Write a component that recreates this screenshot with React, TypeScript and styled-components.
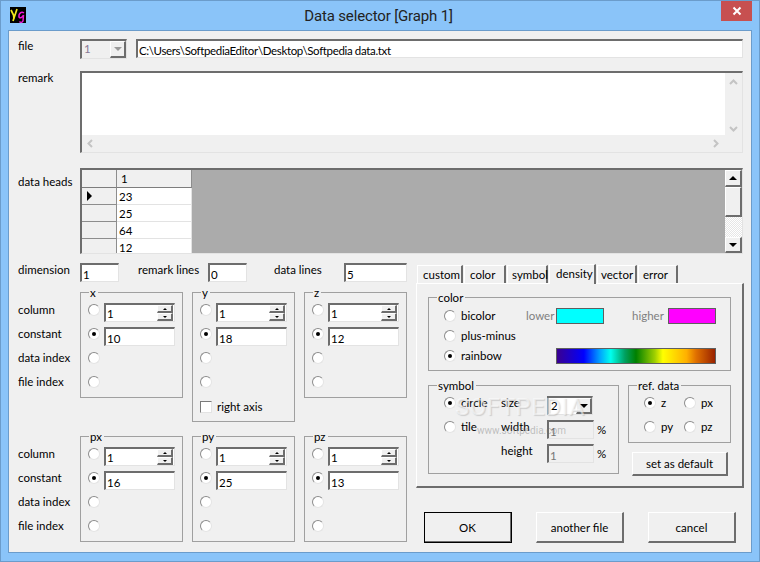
import { Fragment } from "react"
import styled, { createGlobalStyle } from "styled-components"

const GlobalStyle = createGlobalStyle`
  html, body {
    margin: 0;
    padding: 0;
    background: #8ac4f9;
  }
  * {
    box-sizing: border-box;
  }
`

const sunken = `
  border-style: solid;
  border-width: 2px 1px 1px 2px;
  border-color: #6d6d6d #e3e3e3 #e3e3e3 #6d6d6d;
`

const raised = `
  background: #f0f0f0;
  border-style: solid;
  border-width: 1px 2px 2px 1px;
  border-color: #fff #6d6d6d #6d6d6d #fff;
`

const Window = styled.div`
  width: 760px;
  height: 562px;
  display: flex;
  flex-direction: column;
  background: #8ac4f9;
  border: 1px solid #6b9ccb;
  font-family: "Lato", "Liberation Sans", sans-serif;
  font-size: 11.5px;
  color: #000;
  overflow: hidden;
`

const TitleBar = styled.div`
  height: 29px;
  flex: none;
  display: grid;
  grid-template-columns: 1fr auto 1fr;
  align-items: start;
  padding: 0 7px 0 9px;
`

const AppIcon = styled.svg`
  width: 16px;
  height: 16px;
  margin-top: 6px;
  display: block;
`

const Title = styled.div`
  font-family: "Roboto", "Liberation Sans", sans-serif;
  font-size: 15px;
  letter-spacing: -0.15px;
  line-height: 20px;
  margin: 5px 5px 0 0;
  color: #222;
`

const CloseButton = styled.div`
  justify-self: end;
  width: 31px;
  height: 20px;
  background: #c75050;
  display: flex;
  align-items: center;
  justify-content: center;
`

const Client = styled.div`
  margin: 0 7px;
  height: 523px;
  flex: none;
  background: #f0f0f0;
  padding: 8px 8px 0 9px;
  border: 1px solid #6b9ccb;
  display: flex;
  flex-direction: column;
`

const Row = styled.div<{ $top?: number }>`
  display: flex;
  align-items: flex-start;
  margin-top: ${(p) => p.$top ?? 0}px;
`

const Label = styled.div<{ $w?: number; $left?: number; $drop?: number; $muted?: boolean }>`
  width: ${(p) => (p.$w ? `${p.$w}px` : "auto")};
  margin-left: ${(p) => p.$left ?? 0}px;
  margin-top: ${(p) => p.$drop ?? 0}px;
  flex: none;
  line-height: 14px;
  white-space: nowrap;
  color: ${(p) => (p.$muted ? "#7f7f7f" : "inherit")};
`

const TextField = styled.input<{ $w?: number; $h?: number; $left?: number; $tight?: boolean; $disabled?: boolean }>`
  ${sunken}
  display: block;
  width: ${(p) => (p.$w ? `${p.$w}px` : "100%")};
  height: ${(p) => p.$h ?? 19}px;
  flex: ${(p) => (p.$w ? "none" : "1")};
  margin-left: ${(p) => p.$left ?? 0}px;
  min-width: 0;
  background: ${(p) => (p.$disabled ? "#f0f0f0" : "#fff")};
  color: ${(p) => (p.$disabled ? "#777" : "#000")};
  font: inherit;
  letter-spacing: ${(p) => (p.$tight ? "-0.35px" : "normal")};
  padding: 2px 0 0 1px;
  outline: none;
`

const ComboBox = styled.div<{ $w: number; $h: number; $disabled?: boolean }>`
  ${sunken}
  width: ${(p) => p.$w}px;
  height: ${(p) => p.$h}px;
  flex: none;
  display: flex;
  background: ${(p) => (p.$disabled ? "#f0f0f0" : "#fff")};
  color: ${(p) => (p.$disabled ? "#8a7a96" : "#000")};
  padding-left: 2px;
  line-height: 16px;
`

const ComboValue = styled.div`
  flex: 1;
`

const ComboButton = styled.div`
  ${raised}
  width: 16px;
  display: flex;
  align-items: center;
  justify-content: center;
`

const Arrow = styled.span<{ $dir: "up" | "down" | "right"; $size: number; $color?: string; $left?: number }>`
  display: block;
  width: 0;
  height: 0;
  margin-left: ${(p) => p.$left ?? 0}px;
  border-style: solid;
  border-color: transparent;
  border-width: ${(p) =>
    p.$dir === "right"
      ? `${p.$size + 1}px 0 ${p.$size + 1}px ${p.$size + 1}px`
      : p.$dir === "up"
        ? `0 ${p.$size}px ${p.$size}px`
        : `${p.$size}px ${p.$size}px 0`};
  ${(p) => {
    const c = p.$color ?? "#000"
    if (p.$dir === "right") return `border-left-color: ${c};`
    if (p.$dir === "up") return `border-bottom-color: ${c};`
    return `border-top-color: ${c};`
  }}
`

const RemarkBox = styled.div`
  ${sunken}
  flex: 1;
  height: 82px;
  display: grid;
  grid-template-columns: 1fr 17px;
  grid-template-rows: 1fr 17px;
`

const RemarkText = styled.div`
  background: #fff;
`

const VScroll = styled.div`
  display: flex;
  flex-direction: column;
  justify-content: space-between;
  align-items: center;
  padding: 5px 0 2px;
`

const HScroll = styled.div`
  display: flex;
  justify-content: space-between;
  align-items: center;
  padding: 0 5px 0 4px;
`

const Corner = styled.div``

const Chevron = styled.svg`
  width: 9px;
  height: 9px;
  display: block;
`

const HeadGrid = styled.div`
  ${sunken}
  flex: 1;
  height: 86px;
  display: flex;
  background: #ababab;
  overflow: hidden;
`

const HeadTable = styled.div`
  display: grid;
  grid-template-columns: 35px 75px;
  grid-template-rows: 18px;
  grid-auto-rows: 17px;
  align-content: start;
  width: 110px;
  height: 100%;
  overflow: hidden;
  margin-right: auto;
`

const HeadCell = styled.div<{ $top?: boolean; $fixed?: boolean }>`
  background: ${(p) => (p.$fixed ? "#f0f0f0" : "#fff")};
  border-right: 1px solid ${(p) => (p.$fixed ? "#8d8d8d" : "#e3e3e3")};
  border-bottom: 1px solid ${(p) => (p.$top ? "#7d7d7d" : p.$fixed ? "#8d8d8d" : "#e3e3e3")};
  padding: ${(p) => (p.$top ? "0 0 0 4px" : p.$fixed ? "0" : "1px 0 0 2px")};
  line-height: 14px;
  display: flex;
  align-items: center;
`

const GridScroll = styled.div`
  width: 17px;
  flex: none;
  display: flex;
  flex-direction: column;
  background: repeating-conic-gradient(#fff 0 25%, #e6e6e6 0 50%) 0 0 / 2px 2px;
`

const ScrollButton = styled.div<{ $h: number }>`
  ${raised}
  height: ${(p) => p.$h}px;
  flex: none;
  display: flex;
  align-items: center;
  justify-content: center;
`

const ScrollGap = styled.div`
  flex: 1;
`

const Lower = styled.div`
  display: flex;
  align-items: flex-start;
  margin-top: 9px;
`

const LeftColumn = styled.div`
  width: 389px;
  flex: none;
`

const AxisSection = styled.div<{ $top: number }>`
  display: flex;
  align-items: flex-start;
  gap: 9px;
  margin-top: ${(p) => p.$top}px;
`

const AxisLabels = styled.div`
  width: 53px;
  flex: none;
  padding-top: 6px;
`

const AxisLabel = styled.div`
  height: 24px;
  line-height: 24px;
  white-space: nowrap;
`

const Group = styled.div<{ $w?: number; $h: number }>`
  position: relative;
  width: ${(p) => p.$w ?? 103}px;
  height: ${(p) => p.$h}px;
  flex: none;
  border: 1px solid #a0a0a0;
`

const Legend = styled.span`
  position: absolute;
  left: 8px;
  top: -6px;
  padding: 0 2px 0 1px;
  background: #f0f0f0;
  line-height: 12px;
`

const AxisBody = styled.div`
  padding: 5px 0 0 7px;
`

const AxisRow = styled.div`
  height: 24px;
  display: flex;
  align-items: center;
  position: relative;
`

const FieldSlot = styled.div`
  margin: 5px 0 0 4px;
  width: 71px;
  height: 19px;
`

const Radio = styled.span<{ $on?: boolean }>`
  width: 12px;
  height: 12px;
  flex: none;
  display: flex;
  align-items: center;
  justify-content: center;
  border-radius: 50%;
  background: #fff;
  border: 1px solid;
  border-color: #8c8c8c #e4e4e4 #e4e4e4 #8c8c8c;

  &::after {
    content: "";
    display: ${(p) => (p.$on ? "block" : "none")};
    width: 4px;
    height: 4px;
    border-radius: 50%;
    background: #000;
  }
`

const CheckBox = styled.span`
  width: 12px;
  height: 12px;
  flex: none;
  border-style: solid;
  border-width: 1px;
  background: #fff;
  border-color: #7a7a7a #e3e3e3 #e3e3e3 #7a7a7a;
`

const CheckRow = styled.div`
  display: flex;
  align-items: center;
  gap: 5px;
  height: 24px;
  margin-top: 1px;
  line-height: 14px;
`

const SpinBox = styled.div`
  ${sunken}
  width: 100%;
  height: 100%;
  display: flex;
  background: #fff;
`

const SpinValue = styled.div`
  flex: 1;
  padding: 2px 0 0 1px;
  line-height: 14px;
`

const SpinButtons = styled.div`
  width: 16px;
  flex: none;
  display: flex;
  flex-direction: column;
  margin-right: 1px;
`

const SpinButton = styled.div`
  ${raised}
  flex: 1;
  display: flex;
  align-items: center;
  justify-content: center;
`

const RightColumn = styled.div`
  margin-left: 9px;
  width: 328px;
  flex: none;
  position: relative;
`

const TabStrip = styled.div`
  height: 20px;
  display: flex;
  align-items: flex-end;
  padding-left: 1px;
`

const Tab = styled.div<{ $w: number; $pad: number; $active?: boolean }>`
  width: ${(p) => p.$w}px;
  height: ${(p) => (p.$active ? 20 : 18)}px;
  flex: none;
  margin-right: 1px;
  background: #f0f0f0;
  border-style: solid;
  border-width: 1px 2px 0 1px;
  border-color: #fff #6d6d6d #fff #fff;
  padding: 2px 0 0 ${(p) => p.$pad}px;
  line-height: 14px;
  white-space: nowrap;
  ${(p) => (p.$active ? "margin-bottom: -1px; position: relative; z-index: 1;" : "")}
`

const TabPanel = styled.div`
  height: 205px;
  border-style: solid;
  border-width: 1px 2px 2px 1px;
  border-color: #fff #6d6d6d #6d6d6d #fff;
  padding: 13px 11px 0 11px;
`

const ColorBody = styled.div`
  padding: 8px 0 0 15px;
`

const ColorRow = styled.div`
  height: 20px;
  display: flex;
  align-items: center;
`

const RadioText = styled.span<{ $w: number }>`
  width: ${(p) => p.$w}px;
  flex: none;
  padding-left: 5px;
  white-space: nowrap;
  line-height: 14px;
`

const Swatch = styled.div<{ $bg: string; $w: number }>`
  width: ${(p) => p.$w}px;
  height: 16px;
  flex: none;
  background: ${(p) => p.$bg};
  border: 1px solid #5f5f5f;
`

const PanelLower = styled.div`
  display: flex;
  gap: 9px;
  margin-top: 14px;
  align-items: flex-start;
`

const SymbolBody = styled.div`
  display: grid;
  grid-template-columns: 57px 46px 48px auto;
  grid-auto-rows: 24px;
  align-items: center;
  padding: 5px 0 0 15px;
`

const FieldCell = styled.div`
  align-self: end;
`

const RadioCell = styled.div`
  display: flex;
  align-items: center;
`

const Percent = styled.span`
  padding: 5px 0 0 2px;
`

const SideColumn = styled.div`
  width: 103px;
  flex: none;
`

const RefBody = styled.div`
  display: grid;
  grid-template-columns: 40px 40px;
  grid-auto-rows: 24px;
  align-items: center;
  padding: 5px 0 0 15px;
`

const PushButton = styled.div<{ $w: number; $h: number; $default?: boolean }>`
  ${raised}
  width: ${(p) => p.$w}px;
  height: ${(p) => p.$h}px;
  flex: none;
  display: flex;
  align-items: center;
  justify-content: center;
  ${(p) => (p.$default ? "outline: 1px solid #000; outline-offset: -1px; border-color: #000 #6d6d6d #6d6d6d #000;" : "")}
`

const DefaultSlot = styled.div`
  margin: 9px 0 0 4px;
`

const Footer = styled.div`
  display: flex;
  gap: 24px;
  margin: 24px 0 0 8px;
`

const Watermark = styled.div`
  position: absolute;
  left: 39px;
  top: 132px;
  pointer-events: none;
  white-space: nowrap;
  font-family: "Roboto", "Liberation Sans", sans-serif;
`

const WatermarkBig = styled.div`
  font-size: 24px;
  line-height: 24px;
  letter-spacing: 0.5px;
  color: rgba(255, 255, 255, 0.55);
  text-shadow: 1px 1px 1px rgba(130, 130, 130, 0.3);
`

const WatermarkSmall = styled.div`
  font-size: 10px;
  line-height: 12px;
  margin: 6px 0 0 22px;
  color: rgba(110, 110, 110, 0.4);
`

interface AxisGroupProps {
  name: string
  constant: string
  height?: number
  rightAxis?: boolean
}

function AxisGroup({ name, constant, height = 106, rightAxis }: AxisGroupProps) {
  return (
    <Group $h={height}>
      <Legend>{name}</Legend>
      <AxisBody>
        <AxisRow>
          <Radio />
          <FieldSlot>
            <SpinBox>
              <SpinValue>1</SpinValue>
              <SpinButtons>
                <SpinButton>
                  <Arrow $dir="up" $size={2} />
                </SpinButton>
                <SpinButton>
                  <Arrow $dir="down" $size={2} />
                </SpinButton>
              </SpinButtons>
            </SpinBox>
          </FieldSlot>
        </AxisRow>
        <AxisRow>
          <Radio $on />
          <FieldSlot>
            <TextField readOnly value={constant} />
          </FieldSlot>
        </AxisRow>
        <AxisRow>
          <Radio />
        </AxisRow>
        <AxisRow>
          <Radio />
        </AxisRow>
        {rightAxis && (
          <CheckRow>
            <CheckBox />
            right axis
          </CheckRow>
        )}
      </AxisBody>
    </Group>
  )
}

function AxisLabelList() {
  return (
    <AxisLabels>
      <AxisLabel>column</AxisLabel>
      <AxisLabel>constant</AxisLabel>
      <AxisLabel>data index</AxisLabel>
      <AxisLabel>file index</AxisLabel>
    </AxisLabels>
  )
}

function ScrollChevron({ points }: { points: string }) {
  return (
    <Chevron viewBox="0 0 9 9">
      <polyline points={points} fill="none" stroke="#c4c4c4" strokeWidth="2" />
    </Chevron>
  )
}

const TABS = [
  { name: "custom", w: 46, pad: 5 },
  { name: "color", w: 42, pad: 5 },
  { name: "symbol", w: 41, pad: 4 },
  { name: "density", w: 47, pad: 6, active: true },
  { name: "vector", w: 40, pad: 3 },
  { name: "error", w: 40, pad: 4 },
]

const RAINBOW =
  "linear-gradient(90deg, #3a0090 0%, #0000ff 17%, #00a0ff 27%, #00ffee 34%, #00a060 43%, #008000 50%, #a0d000 62%, #ffff00 67%, #ffb000 82%, #e07000 88%, #992200 100%)"

function App() {
  return (
    <Window>
      <GlobalStyle />
      <TitleBar>
        <AppIcon viewBox="0 0 16 16">
          <rect width="16" height="16" fill="#000" />
          <path d="M1 3 L3.5 8 L4 12 M7 2 C6 5 5 8 3 14" fill="none" stroke="#f4e81c" strokeWidth="1.7" />
          <path d="M14 6 C11 4 8.5 7 9 10 C9.5 11.5 12 11 13.5 8 L13 14 C12 16 10 15.5 9.5 14.5" fill="none" stroke="#ee18d8" strokeWidth="1.5" />
        </AppIcon>
        <Title>Data selector [Graph 1]</Title>
        <CloseButton>
          <svg width="10" height="10" viewBox="0 0 10 10">
            <path d="M1.5 1.5 L8.5 8.5 M8.5 1.5 L1.5 8.5" stroke="#fff" strokeWidth="2" />
          </svg>
        </CloseButton>
      </TitleBar>
      <Client>
        <Row>
          <Label $w={62}>file</Label>
          <ComboBox $w={47} $h={20} $disabled>
            <ComboValue>1</ComboValue>
            <ComboButton>
              <Arrow $dir="down" $size={4} $color="#9a9a9a" />
            </ComboButton>
          </ComboBox>
          <TextField readOnly value="C:\Users\SoftpediaEditor\Desktop\Softpedia data.txt" $left={9} $tight />
        </Row>
        <Row $top={12}>
          <Label $w={62}>remark</Label>
          <RemarkBox>
            <RemarkText />
            <VScroll>
              <ScrollChevron points="1,6 4.5,2.5 8,6" />
              <ScrollChevron points="1,3 4.5,6.5 8,3" />
            </VScroll>
            <HScroll>
              <ScrollChevron points="6,1 2.5,4.5 6,8" />
              <ScrollChevron points="3,1 6.5,4.5 3,8" />
            </HScroll>
            <Corner />
          </RemarkBox>
        </Row>
        <Row $top={15}>
          <Label $w={62} $drop={7}>data heads</Label>
          <HeadGrid>
            <HeadTable>
              <HeadCell $top $fixed />
              <HeadCell $top $fixed>1</HeadCell>
              {["23", "25", "64", "12"].map((value, i) => (
                <Fragment key={value}>
                  <HeadCell $fixed>
                    {i === 0 && <Arrow $dir="right" $size={4} $left={5} />}
                  </HeadCell>
                  <HeadCell>{value}</HeadCell>
                </Fragment>
              ))}
            </HeadTable>
            <GridScroll>
              <ScrollButton $h={17}>
                <Arrow $dir="up" $size={4} />
              </ScrollButton>
              <ScrollButton $h={30} />
              <ScrollGap />
              <ScrollButton $h={16}>
                <Arrow $dir="down" $size={4} />
              </ScrollButton>
            </GridScroll>
          </HeadGrid>
        </Row>
        <Lower>
          <LeftColumn>
            <Row>
              <Label $w={62}>dimension</Label>
              <TextField readOnly value="1" $w={39} />
              <Label $w={70} $left={19}>remark lines</Label>
              <TextField readOnly value="0" $w={39} />
              <Label $w={70} $left={27}>data lines</Label>
              <TextField readOnly value="5" $w={63} />
            </Row>
            <AxisSection $top={10}>
              <AxisLabelList />
              <AxisGroup name="x" constant="10" />
              <AxisGroup name="y" constant="18" height={130} rightAxis />
              <AxisGroup name="z" constant="12" />
            </AxisSection>
            <AxisSection $top={14}>
              <AxisLabelList />
              <AxisGroup name="px" constant="16" />
              <AxisGroup name="py" constant="25" />
              <AxisGroup name="pz" constant="13" />
            </AxisSection>
          </LeftColumn>
          <RightColumn>
            <TabStrip>
              {TABS.map((tab) => (
                <Tab key={tab.name} $w={tab.w} $pad={tab.pad} $active={tab.active}>
                  {tab.name}
                </Tab>
              ))}
            </TabStrip>
            <TabPanel>
              <Group $w={303} $h={74}>
                <Legend>color</Legend>
                <ColorBody>
                  <ColorRow>
                    <Radio />
                    <RadioText $w={70}>bicolor</RadioText>
                    <Label $w={30} $muted>lower</Label>
                    <Swatch $bg="#00ffff" $w={48} />
                    <Label $w={36} $left={28} $muted>higher</Label>
                    <Swatch $bg="#ff00ff" $w={48} />
                  </ColorRow>
                  <ColorRow>
                    <Radio />
                    <RadioText $w={70}>plus-minus</RadioText>
                  </ColorRow>
                  <ColorRow>
                    <Radio $on />
                    <RadioText $w={100}>rainbow</RadioText>
                    <Swatch $bg={RAINBOW} $w={160} />
                  </ColorRow>
                </ColorBody>
              </Group>
              <PanelLower>
                <Group $w={191} $h={89}>
                  <Legend>symbol</Legend>
                  <SymbolBody>
                    <RadioCell>
                      <Radio $on />
                      <RadioText $w={40}>circle</RadioText>
                    </RadioCell>
                    <Label>size</Label>
                    <FieldCell>
                      <ComboBox $w={46} $h={19}>
                        <ComboValue>2</ComboValue>
                        <ComboButton>
                          <Arrow $dir="down" $size={4} />
                        </ComboButton>
                      </ComboBox>
                    </FieldCell>
                    <span />
                    <RadioCell>
                      <Radio />
                      <RadioText $w={40}>tile</RadioText>
                    </RadioCell>
                    <Label>width</Label>
                    <FieldCell>
                      <TextField readOnly value="1" $w={47} $disabled />
                    </FieldCell>
                    <Percent>%</Percent>
                    <span />
                    <Label>height</Label>
                    <FieldCell>
                      <TextField readOnly value="1" $w={47} $disabled />
                    </FieldCell>
                    <Percent>%</Percent>
                  </SymbolBody>
                </Group>
                <SideColumn>
                  <Group $h={58}>
                    <Legend>ref. data</Legend>
                    <RefBody>
                      <RadioCell>
                        <Radio $on />
                        <RadioText $w={20}>z</RadioText>
                      </RadioCell>
                      <RadioCell>
                        <Radio />
                        <RadioText $w={20}>px</RadioText>
                      </RadioCell>
                      <RadioCell>
                        <Radio />
                        <RadioText $w={20}>py</RadioText>
                      </RadioCell>
                      <RadioCell>
                        <Radio />
                        <RadioText $w={20}>pz</RadioText>
                      </RadioCell>
                    </RefBody>
                  </Group>
                  <DefaultSlot>
                    <PushButton $w={96} $h={24}>set as default</PushButton>
                  </DefaultSlot>
                </SideColumn>
              </PanelLower>
            </TabPanel>
            <Footer>
              <PushButton $w={88} $h={31} $default>OK</PushButton>
              <PushButton $w={88} $h={31}>another file</PushButton>
              <PushButton $w={88} $h={31}>cancel</PushButton>
            </Footer>
            <Watermark>
              <WatermarkBig>SOFTPEDIA</WatermarkBig>
              <WatermarkSmall>www.softpedia.com</WatermarkSmall>
            </Watermark>
          </RightColumn>
        </Lower>
      </Client>
    </Window>
  )
}

export default App
